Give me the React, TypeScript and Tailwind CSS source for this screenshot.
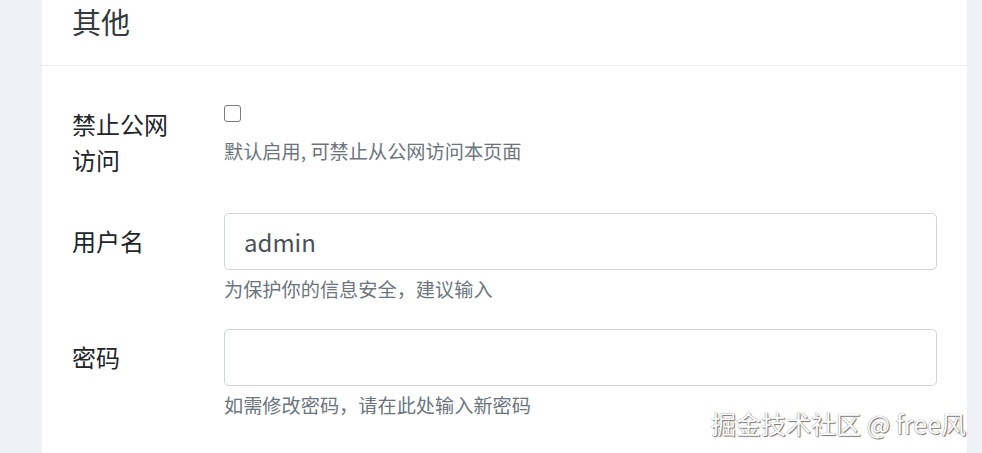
import React from "react";

const font = "font-['Noto_Sans_CJK_SC','Noto_Sans',sans-serif]";

function Row({
  label,
  labelPad,
  children,
  className,
}: {
  label: string;
  labelPad: string;
  children: React.ReactNode;
  className?: string;
}) {
  return (
    <div className={`flex items-start ${className ?? ""}`}>
      <label className={`w-[152px] shrink-0 pr-[40px] text-[24px] leading-[36px] text-[#212529] ${labelPad}`}>
        {label}
      </label>
      <div className="min-w-0 flex-1">{children}</div>
    </div>
  );
}

export default function App() {
  return (
    <div className={`relative h-[453px] w-full overflow-hidden bg-[#eff0f6] ${font}`}>
      <div className="ml-[42px] mr-[15px] h-full bg-white">
        <div className="h-[66px] border-b border-[#ebedf0] px-[30px] pt-[4px]">
          <h2 className="text-[29px] leading-[35px] text-[#343a40]">其他</h2>
        </div>

        <div className="px-[30px] pt-[39px]">
          <Row label="禁止公网访问" labelPad="pt-[1px]" className="mb-[35px]">
            <input
              type="checkbox"
              className="block h-[17px] w-[17px] appearance-none rounded-[3px] border-[1.5px] border-[#7a7a7a] bg-white"
            />
            <p className="mt-[15px] text-[19.2px] leading-[29px] text-[#6c757d]">
              默认启用, 可禁止从公网访问本页面
            </p>
          </Row>

          <Row label="用户名" labelPad="pt-[10px]" className="mb-[25px]">
            <input
              type="text"
              defaultValue="admin"
              className="block h-[57px] w-full rounded-[5px] border border-[#ced4da] px-[19px] text-[24px] text-[#495057] outline-none"
            />
            <p className="mt-[5px] text-[19.2px] leading-[29px] text-[#6c757d]">
              为保护你的信息安全，建议输入
            </p>
          </Row>

          <Row label="密码" labelPad="pt-[10px]">
            <input
              type="password"
              className="block h-[57px] w-full rounded-[5px] border border-[#ced4da] px-[19px] text-[24px] text-[#495057] outline-none"
            />
            <p className="mt-[5px] text-[19.2px] leading-[29px] text-[#6c757d]">
              如需修改密码，请在此处输入新密码
            </p>
          </Row>
        </div>
      </div>

      <div className="absolute bottom-[12px] right-[16px] text-[25px] leading-[36px] text-white [text-shadow:0_0_1px_#666,1px_1px_1px_#777]">
        掘金技术社区 @ free风
      </div>
    </div>
  );
}
